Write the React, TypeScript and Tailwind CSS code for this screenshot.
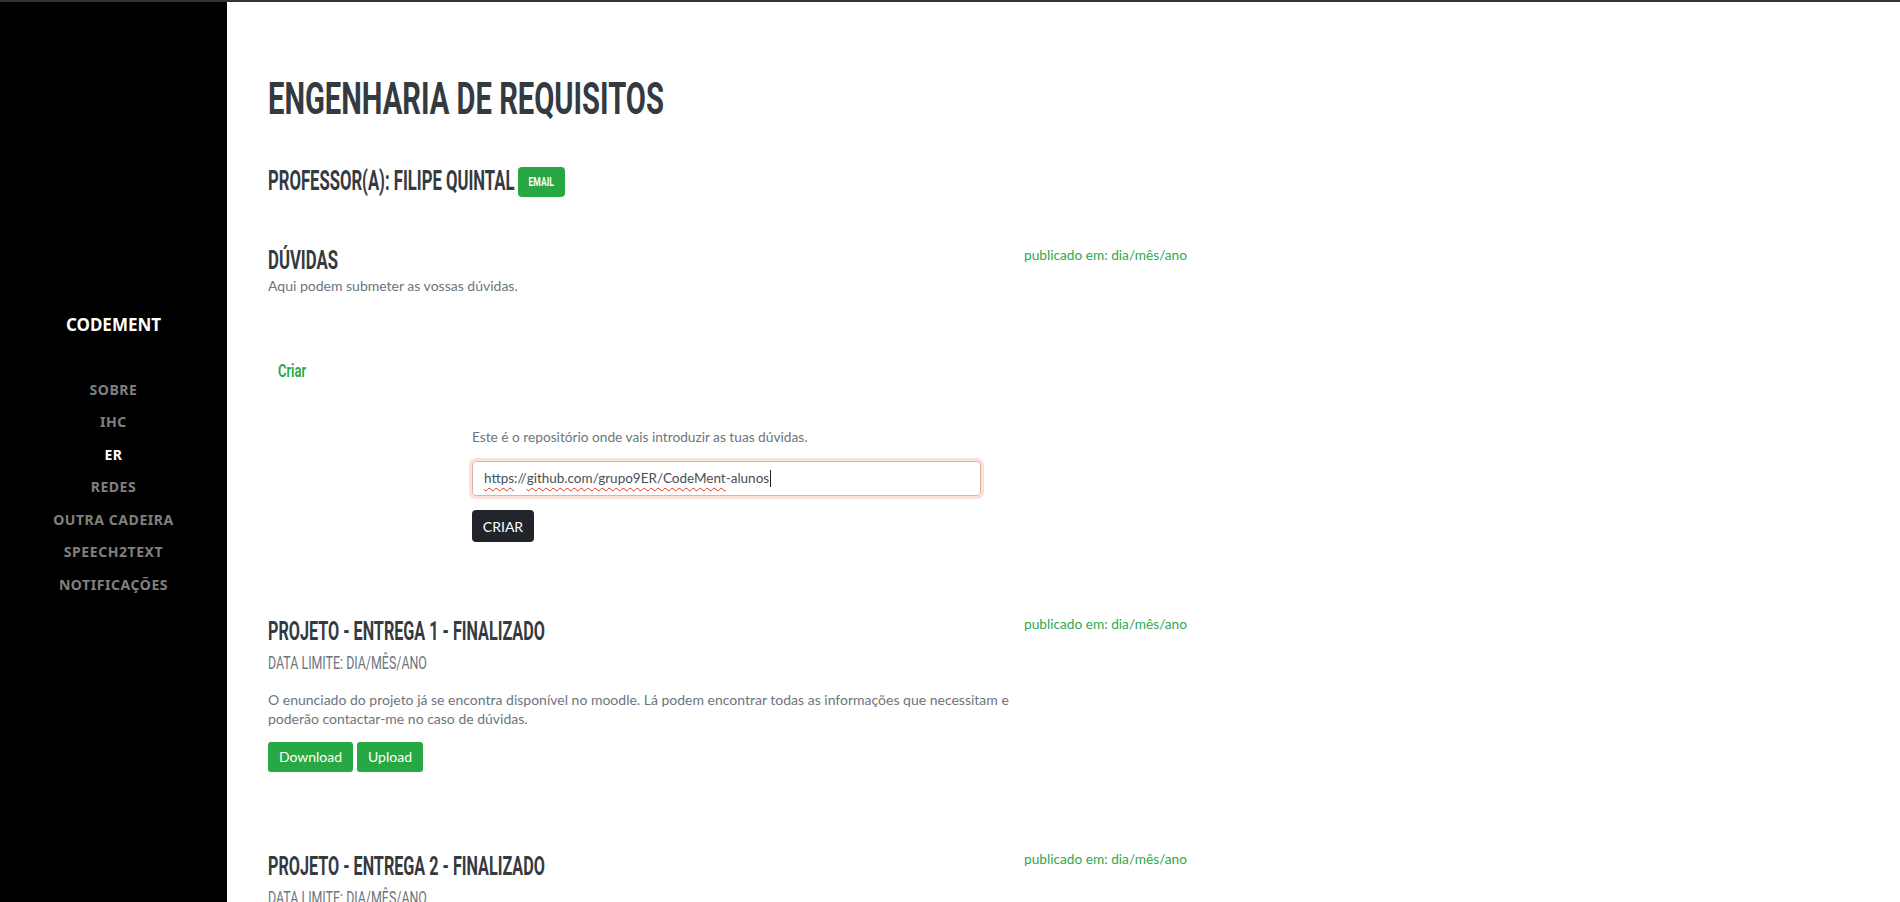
import React from "react";

const navItems = ["SOBRE", "IHC", "ER", "REDES", "OUTRA CADEIRA", "SPEECH2TEXT", "NOTIFICAÇÕES"];

function Sidebar() {
    return <aside className="w-[227px] shrink-0 bg-black h-[calc(100vh-2px)] sticky top-[2px] flex flex-col items-center justify-center pt-[10px] font-['Noto_Sans',sans-serif]">
        <div className="text-white text-[17px] font-bold leading-[24px]">CODEMENT</div>
        <nav className="mt-[37px] flex flex-col items-center">
            {navItems.map((item) => <a key={item} href="#"
                className={item === "ER"
                    ? "text-white text-[14px] font-bold leading-[32.4px] tracking-[0.04em]"
                    : "text-[#808080] text-[14px] font-bold leading-[32.4px] tracking-[0.04em]"}>
                {item}
            </a>)}
        </nav>
    </aside>
}

function Project({ n }: { n: number }) {
    return <div className="flex w-[918px]">
        <div className="flex-1">
            <h2 className="h-[26px] text-[26px] leading-none font-bold text-[#343a40] whitespace-nowrap font-['Roboto',sans-serif]">
                <span className="inline-block origin-left scale-x-[0.622]">PROJETO - ENTREGA {n} - FINALIZADO</span>
            </h2>
            <div className="mt-[10px] h-[18px] text-[18px] leading-none text-[#6c757d] whitespace-nowrap font-['Roboto',sans-serif]">
                <span className="inline-block origin-left scale-x-[0.69]">DATA LIMITE: DIA/MÊS/ANO</span>
            </div>
            <p className="mt-[17.5px] text-[14px] leading-[19.5px] max-w-[745px]">
                O enunciado do projeto já se encontra disponível no moodle. Lá podem encontrar todas as informações que necessitam e poderão contactar-me no caso de dúvidas.
            </p>
            <div className="mt-[13px] flex gap-[4px]">
                <button className="w-[85px] h-[30px] rounded-[3px] bg-[#28a745] text-white text-[14px]">Download</button>
                <button className="w-[66px] h-[30px] rounded-[3px] bg-[#28a745] text-white text-[14px]">Upload</button>
            </div>
        </div>
        <span className="shrink-0 w-[162px] -mt-[2px] whitespace-nowrap text-[13.7px] leading-[15px] text-[#2fa84f]">publicado em: dia/mês/ano</span>
    </div>
}

export default function App() {
    return <div className="min-h-screen bg-white">
        <div className="h-[2px] bg-[#333333]" />
        <div className="flex">
            <Sidebar />
            <main className="flex-1 pl-[41px] pt-[74px] pb-[80px] font-['Lato',sans-serif] text-[#6c757d]">
                <h1 className="h-[45px] text-[45px] leading-none font-bold text-[#343a40] whitespace-nowrap font-['Roboto',sans-serif]">
                    <span className="inline-block origin-left scale-x-[0.648]">ENGENHARIA DE REQUISITOS</span>
                </h1>

                <div className="mt-[46px] flex items-start">
                    <h3 className="w-[245px] h-[28px] text-[28px] leading-none font-bold text-[#343a40] whitespace-nowrap font-['Roboto',sans-serif]">
                        <span className="inline-block origin-left scale-x-[0.595]">PROFESSOR(A): FILIPE QUINTAL</span>
                    </h3>
                    <button className="ml-[5px] w-[47px] h-[30px] rounded-[4px] bg-[#28a745] text-white text-[13px] font-bold font-['Roboto',sans-serif]">
                        <span className="inline-block scale-x-[0.66]">EMAIL</span>
                    </button>
                </div>

                <section className="mt-[50px] flex w-[918px]">
                    <div className="flex-1">
                        <h2 className="h-[26px] text-[26px] leading-none font-bold text-[#343a40] whitespace-nowrap font-['Roboto',sans-serif]">
                            <span className="inline-block origin-left scale-x-[0.644]">DÚVIDAS</span>
                        </h2>
                        <p className="mt-[3px] text-[14px] leading-[20px]">Aqui podem submeter as vossas dúvidas.</p>

                        <a href="#" className="block mt-[65px] ml-[10px] h-[19px] text-[19px] leading-none font-semibold text-[#28a745] font-['Roboto',sans-serif]">
                            <span className="inline-block origin-left scale-x-[0.68]">Criar</span>
                        </a>

                        <div className="ml-[204px] mt-[47px] w-[509px]">
                            <p className="text-[13.7px] leading-[20px]">Este é o repositório onde vais introduzir as tuas dúvidas.</p>
                            <div className="mt-[14px] h-[35px] rounded-[4px] border border-[#e6b09f] ring-[3px] ring-[#f9e0d8] px-[11px] flex items-center text-[13.5px] text-[#495057]">
                                <span className="underline decoration-wavy decoration-[#e0301e] decoration-1 underline-offset-[4px]">https</span>
                                <span>://</span>
                                <span className="underline decoration-wavy decoration-[#e0301e] decoration-1 underline-offset-[4px]">github.com/grupo9ER/CodeMent</span>
                                <span>-alunos</span>
                                <span className="ml-[1px] w-[1px] h-[17px] bg-[#222]" />
                            </div>
                            <button className="mt-[14px] w-[62px] h-[32px] rounded-[4px] bg-[#212529] text-white text-[14px]">CRIAR</button>
                        </div>
                    </div>
                    <span className="shrink-0 w-[162px] whitespace-nowrap text-[13.7px] leading-[15px] text-[#2fa84f]">publicado em: dia/mês/ano</span>
                </section>

                <section className="mt-[76px]">
                    <Project n={1} />
                </section>
                <section className="mt-[81px]">
                    <Project n={2} />
                </section>
            </main>
        </div>
    </div>
}
